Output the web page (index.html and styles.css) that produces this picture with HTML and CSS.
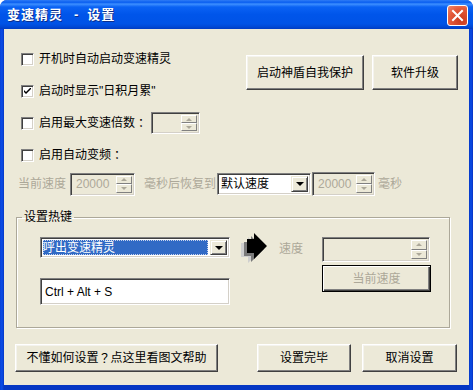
FILE: index.html
```html
<!DOCTYPE html>
<html>
<head>
    <meta charset="utf-8" />
    <title>变速精灵 - 设置</title>
    <link rel="stylesheet" href="styles.css">
</head>
<body>
<div class="window">
    <div class="titlebar">
        <span class="title">变速精灵<span class="dash">-</span>设置</span>
        <span class="close">
            <svg width="19" height="19" viewBox="0 0 19 19"><path d="M5 5 L14 14 M14 5 L5 14" stroke="#fff" stroke-width="2" stroke-linecap="square"/></svg>
        </span>
    </div>

    <div class="client">
        <div class="top">
            <div class="options">
                <div class="opt-row"><span class="check"></span>开机时自动启动变速精灵</div>
                <div class="opt-row">
                    <span class="check">
                        <svg width="7" height="7" viewBox="0 0 7 7"><path d="M0 2 L0 4 L2 6 L7 1 L7 -1 L2 4 Z" fill="#000"/></svg>
                    </span>启动时显示"日积月累"
                </div>
                <div class="opt-row">
                    <span class="check"></span>启用最大变速倍数<span class="fw">：</span>
                    <div class="spin spin-small">
                        <span class="spin-val"></span>
                        <span class="spin-btns"><i class="up"></i><i class="down"></i></span>
                    </div>
                </div>
                <div class="opt-row"><span class="check"></span>启用自动变频<span class="fw">：</span></div>
            </div>
            <div class="side-buttons">
                <div class="btn btn-shield">启动神盾自我保护</div>
                <div class="btn btn-upgrade">软件升级</div>
            </div>
        </div>

        <div class="freq-row">
            <span class="muted">当前速度</span>
            <div class="spin spin-speed">
                <span class="spin-val">20000</span>
                <span class="spin-btns"><i class="up"></i><i class="down"></i></span>
            </div>
            <span class="muted after-spin">毫秒后恢复到</span>
            <div class="combo combo-restore">
                <span class="combo-text">默认速度</span>
                <span class="combo-btn"><i></i></span>
            </div>
            <div class="spin spin-restore">
                <span class="spin-val">20000</span>
                <span class="spin-btns"><i class="up"></i><i class="down"></i></span>
            </div>
            <span class="muted ms">毫秒</span>
        </div>

        <fieldset class="hotkey">
            <legend>设置热键</legend>
            <div class="hk-body">
                <div class="hk-left">
                    <div class="combo combo-action">
                        <span class="combo-text selected"><span>呼出变速精灵</span></span>
                        <span class="combo-btn"><i></i></span>
                    </div>
                    <div class="textbox">Ctrl + Alt + S</div>
                </div>
                <svg class="hk-arrow" width="27" height="30" viewBox="0 0 27 30">
                    <path d="M1 10 H8 V4 L21 17 L8 30 V24 H1 Z" fill="#cfcfcf"/>
                    <path d="M4 9 H11 V3 L24 16 L11 29 V23 H4 Z" fill="#7a7a7a"/>
                    <path d="M7 6 H14 V0 L27 13 L14 26 V20 H7 Z" fill="#000"/>
                </svg>
                <span class="muted hk-label">速度</span>
                <div class="hk-right">
                    <div class="spin spin-hk">
                        <span class="spin-val"></span>
                        <span class="spin-btns"><i class="up"></i><i class="down"></i></span>
                    </div>
                    <div class="btn btn-default muted">当前速度</div>
                </div>
            </div>
        </fieldset>

        <div class="bottom">
            <div class="btn btn-help">不懂如何设置<span class="fw">？</span>点这里看图文帮助</div>
            <div class="btn btn-done">设置完毕</div>
            <div class="btn btn-cancel">取消设置</div>
        </div>
    </div>
</div>
</body>
</html>
```

FILE: styles.css
```css
* { margin: 0; border: 0; padding: 0; box-sizing: border-box; }

body {
    background: #ffffff;
    font: 12px/14px "Liberation Sans", "Noto Sans CJK SC", sans-serif;
    color: #000;
}

/* full-width punctuation, centred in its cell */
.fw { font-family: "Noto Sans CJK TC", sans-serif; }

.window {
    width: 473px;
    height: 390px;
    display: flex;
    flex-direction: column;
    background: linear-gradient(to right, #0842d6, #0a4de8 2px, #0537c4 4px, #0537c4 469px, #0a4de8 471px, #0831c0);
    border-radius: 7px 7px 0 0;
    overflow: hidden;
}

.titlebar {
    height: 29px;
    display: flex;
    align-items: center;
    padding: 0 5px 0 7px;
    background: linear-gradient(to bottom, #2e7cf6 0%, #0a5ff0 8%, #3d8fff 14%, #0a62f4 24%, #0055ea 50%, #0053e6 82%, #0049d6 92%, #003cc2 100%);
    color: #fff;
    font-weight: bold;
    font-size: 13px;
    text-shadow: 1px 1px #0c2e8c;
}

.titlebar .title { flex: 1; letter-spacing: 1px; }
.titlebar .dash { margin: 0 8px 0 11px; }

.close {
    width: 21px;
    height: 21px;
    border: 1px solid #fff;
    border-radius: 3px;
    background: radial-gradient(circle at 70% 75%, #c8391c, #e45a3a 60%, #f08a6e);
    display: flex;
    align-items: center;
    justify-content: center;
    margin-top: 1px;
}

.client {
    flex: 1;
    margin: 0 4px 5px;
    background: #ece9d8;
    padding-top: 14px;
}

.muted { color: #aca899; }

/* checkboxes */
.check {
    width: 13px;
    height: 13px;
    margin-right: 5px;
    background: #fff;
    border: 1px solid;
    border-color: #808080 #ffffff #ffffff #808080;
    box-shadow: inset 1px 1px #404040, inset -1px -1px #d4d0c8;
    display: flex;
    align-items: center;
    justify-content: center;
}

.top { display: flex; }

.options {
    width: 242px;
    padding-left: 17px;
}

.opt-row {
    height: 32px;
    display: flex;
    align-items: center;
    white-space: nowrap;
}

.side-buttons {
    display: flex;
    gap: 8px;
    margin-top: 12px;
}

/* raised buttons */
.btn {
    display: flex;
    align-items: center;
    justify-content: center;
    border: 1px solid;
    border-color: #ffffff #404040 #404040 #ffffff;
    box-shadow: inset -1px -1px #808080, inset 1px 1px #f4f3ee;
    background: #ece9d8;
    white-space: nowrap;
}

.btn-shield { width: 118px; height: 35px; }
.btn-upgrade { width: 86px; height: 35px; }

.btn-default {
    border: 1px solid #000;
    box-shadow: inset 1px 1px #fff, inset -1px -1px #404040, inset -2px -2px #808080;
}

/* spin boxes */
.spin {
    display: flex;
    border: 1px solid;
    border-color: #808080 #ffffff #ffffff #808080;
    box-shadow: inset 1px 1px #404040, inset -1px -1px #d4d0c8;
    background: #ece9d8;
    padding: 2px;
}

.spin-val {
    flex: 1;
    color: #aca899;
    padding-left: 3px;
    display: flex;
    align-items: center;
}

.spin-btns {
    width: 16px;
    display: flex;
    flex-direction: column;
}

.spin-btns i {
    flex: 1;
    border: 1px solid;
    border-color: #ffffff #808080 #808080 #ffffff;
    display: flex;
    align-items: center;
    justify-content: center;
}

.spin-btns i::after {
    content: "";
    border-left: 3px solid transparent;
    border-right: 3px solid transparent;
}

.spin-btns .up::after { border-bottom: 3px solid #aca899; }
.spin-btns .down::after { border-top: 3px solid #aca899; }

.spin-small { width: 49px; height: 22px; margin-left: 4px; }

.freq-row {
    height: 26px;
    display: flex;
    align-items: center;
    padding-left: 14px;
    white-space: nowrap;
}

.spin-speed { width: 65px; height: 23px; margin-left: 4px; }
.after-spin { margin-left: 9px; }
.spin-restore { width: 63px; height: 24px; margin-left: 1px; }
.ms { margin-left: 3px; }

/* drop-down lists */
.combo {
    display: flex;
    border: 1px solid;
    border-color: #808080 #ffffff #ffffff #808080;
    box-shadow: inset 1px 1px #404040, inset -1px -1px #d4d0c8;
    background: #fff;
    padding: 2px;
}

.combo-text {
    flex: 1;
    display: flex;
    align-items: center;
    padding-left: 1px;
}

.combo-btn {
    width: 17px;
    border: 1px solid;
    border-color: #ece9d8 #404040 #404040 #ece9d8;
    box-shadow: inset 1px 1px #fff, inset -1px -1px #808080;
    background: #ece9d8;
    display: flex;
    align-items: center;
    justify-content: center;
}

.combo-btn i {
    border-left: 4px solid transparent;
    border-right: 4px solid transparent;
    border-top: 4px solid #000;
}

.combo-restore { width: 94px; height: 22px; margin-left: 1px; }

.combo-action { width: 190px; height: 21px; }

.combo-text.selected { padding: 0 2px 0 0; }

.combo-text.selected span {
    flex: 1;
    height: 100%;
    display: flex;
    align-items: center;
    background: #316ac5;
    color: #fff;
    outline: 1px dotted #c8d4ee;
    outline-offset: -1px;
}

/* hotkey group */
.hotkey {
    margin: 12px 0 0 12px;
    width: 434px;
    border: 1px solid #aca899;
    box-shadow: inset 1px 1px #fff, 1px 1px #fff;
    padding: 0 0 22px;
}

.hotkey legend {
    margin-left: 5px;
    padding: 0 2px;
    line-height: 16px;
}

.hk-body {
    display: flex;
    align-items: flex-start;
    padding-top: 12px;
}

.hk-left {
    margin-left: 23px;
    width: 190px;
    display: flex;
    flex-direction: column;
    gap: 20px;
}

.textbox {
    height: 27px;
    background: #fff;
    border: 1px solid;
    border-color: #808080 #ffffff #ffffff #808080;
    box-shadow: inset 1px 1px #404040, inset -1px -1px #d4d0c8;
    padding-left: 4px;
    display: flex;
    align-items: center;
}

.hk-arrow { margin: -4px 0 0 10px; }

.hk-label { margin: 5px 0 0 12px; }

.hk-right {
    margin-left: 19px;
    width: 108px;
    display: flex;
    flex-direction: column;
    gap: 3px;
}

.spin-hk { height: 25px; }
.hk-right .btn-default { height: 27px; width: 109px; }

/* bottom buttons */
.bottom {
    display: flex;
    gap: 11px;
    margin-top: 16px;
    padding: 0 12px 0 11px;
}

.bottom .btn { height: 28px; }
.btn-help { width: 203px; margin-right: auto; }
.btn-done { width: 94px; }
.btn-cancel { width: 95px; }
```
